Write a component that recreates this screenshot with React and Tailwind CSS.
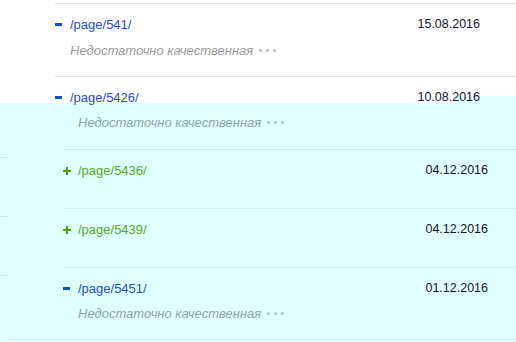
import React from 'react';

const Minus = () => <span className="block w-[7px] h-[3px] bg-[#0b55c3]" />;

const Plus = () => (
  <span className="relative block w-[8px] h-[8px]">
    <span className="absolute left-0 top-[3px] w-[8px] h-[2px] bg-[#44aa00]" />
    <span className="absolute left-[3px] top-0 w-[2px] h-[8px] bg-[#44aa00]" />
  </span>
);

const Dots = ({ color }) => (
  <span className="flex items-center gap-[4px] ml-[6px]">
    {[0, 1, 2].map((i) => (
      <span key={i} className={`block w-[3px] h-[3px] rounded-full ${color}`} />
    ))}
  </span>
);

const LinkLine = ({ open, path, date }) => (
  <div className="flex items-center h-[15px] leading-[15px]">
    <span className="w-[15px] flex items-center">{open ? <Minus /> : <Plus />}</span>
    <span className={open ? 'text-[#2250c0]' : 'text-[#58a826]'}>{path}</span>
    <span className="relative ml-auto text-[12.5px] text-[#14142a]">{date}</span>
  </div>
);

const Note = ({ tint, className = '' }) => (
  <div className={`flex items-center h-[15px] leading-[15px] pl-[15px] ${className}`}>
    <span className={`italic ${tint ? 'text-[#8aa6a6]' : 'text-[#9a9a9a]'}`}>Недостаточно качественная</span>
    <Dots color={tint ? 'bg-[#a9c6c6]' : 'bg-[#b4b4b4]'} />
  </div>
);

export default function App() {
  return (
    <div className="w-[516px] h-[342px] overflow-hidden bg-white text-[13px] font-['Liberation_Sans',Arial,sans-serif]">
      {/* white part */}
      <div className="relative h-[103px] pt-[3px] pl-[55px]">
        <div className="absolute left-[456px] top-[96px] w-[60px] h-[7px] bg-[#e0ffff]" />
        <div className="border-t border-[#e2e2e2] pt-[13px] pb-[18px] pr-[36px]">
          <LinkLine open path="/page/541/" date="15.08.2016" />
          <Note className="mt-[11px]" />
        </div>
        <div className="border-t border-[#e2e2e2] pt-[13px] pr-[36px]">
          <LinkLine open path="/page/5426/" date="10.08.2016" />
        </div>
      </div>

      {/* dragged, tinted part */}
      <div className="flex h-[239px] bg-[#e0ffff]">
        <div className="w-[8px] shrink-0">
          <div className="mt-[54px] h-px bg-[#c6eaea]" />
          <div className="mt-[58px] h-px bg-[#c6eaea]" />
          <div className="mt-[58px] h-px bg-[#c6eaea]" />
        </div>
        <div className="flex-1">
          <div className="ml-[55px]">
            <div className="pt-[12px] pb-[19px] pr-[28px]">
              <Note tint />
            </div>
            <div className="border-t border-[#c6eeee] pt-[13px] pb-[30px] pr-[28px]">
              <LinkLine path="/page/5436/" date="04.12.2016" />
            </div>
            <div className="border-t border-[#c6eeee] pt-[13px] pb-[30px] pr-[28px]">
              <LinkLine path="/page/5439/" date="04.12.2016" />
            </div>
            <div className="border-t border-[#c6eeee] pt-[13px] pb-[18px] pr-[28px]">
              <LinkLine open path="/page/5451/" date="01.12.2016" />
              <Note tint className="mt-[10px]" />
            </div>
          </div>
          <div className="h-px bg-[#c6eeee]" />
        </div>
      </div>
    </div>
  );
}
